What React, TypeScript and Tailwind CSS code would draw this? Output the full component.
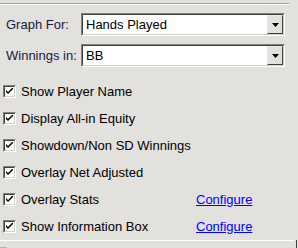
import React from "react";

const font = { fontFamily: "Tahoma, 'Liberation Sans', Arial, sans-serif" };

function Combo({ value }: { value: string }) {
  return (
    <div className="w-[204px] h-[23px] border border-t-[#808080] border-l-[#808080] border-r-white border-b-white">
      <div className="w-full h-full border border-t-[#404040] border-l-[#404040] border-r-[#d4d0c8] border-b-[#d4d0c8] bg-white flex items-center">
        <span className="flex-1 pl-[3px] text-[13px] text-black leading-none whitespace-nowrap">{value}</span>
        <div className="w-[16px] h-[19px] bg-[#e2e1dd] border border-t-[#ecebe8] border-l-[#ecebe8] border-r-[#404040] border-b-[#404040] flex items-center justify-center">
          <svg width="7" height="4" viewBox="0 0 7 4">
            <path d="M0 0h7L3.5 4z" fill="#000" />
          </svg>
        </div>
      </div>
    </div>
  );
}

function Check({ label, link }: { label: string; link?: boolean }) {
  return (
    <div className="h-[27px] flex items-center">
      <div className="ml-[3px] w-[13px] h-[13px] border border-t-[#808080] border-l-[#808080] border-r-white border-b-white">
        <div className="w-full h-full border border-t-[#404040] border-l-[#404040] border-r-[#d4d0c8] border-b-[#d4d0c8] bg-white flex items-center justify-center">
          <svg width="7" height="7" viewBox="0 0 7 7">
            <path d="M0 2l2 2l5-5v2l-5 5l-2-2z" fill="#000" />
            <path d="M0 3l2 2l5-5" stroke="#000" strokeWidth="1" fill="none" />
          </svg>
        </div>
      </div>
      <span className="ml-[5px] w-[175px] text-[13px] text-[#000000] leading-none whitespace-nowrap">{label}</span>
      {link && <span className="text-[13px] text-[#0000ff] underline leading-none whitespace-nowrap">Configure</span>}
    </div>
  );
}

export default function App() {
  return (
    <div className="w-[298px] h-[248px] bg-[#e2e1dd] overflow-hidden relative" style={font}>
      <div className="pt-[3px]">
        <div className="w-[289px] border-t border-t-[#a09f9b] border-b border-b-white" />
      </div>
      <div className="mt-[8px] flex items-center h-[23px]">
        <span className="ml-[6px] w-[75px] text-[13px] text-[#1a1a40] leading-none whitespace-nowrap">Graph For:</span>
        <Combo value="Hands Played" />
      </div>
      <div className="mt-[8px] flex items-center h-[23px]">
        <span className="ml-[6px] w-[75px] text-[13px] text-[#1a1a40] leading-none whitespace-nowrap">Winnings in:</span>
        <Combo value="BB" />
      </div>
      <div className="mt-[11px] flex flex-col">
        <Check label="Show Player Name" />
        <Check label="Display All-in Equity" />
        <Check label="Showdown/Non SD Winnings" />
        <Check label="Overlay Net Adjusted" />
        <Check label="Overlay Stats" link />
        <Check label="Show Information Box" link />
      </div>
      <div className="absolute left-0 top-[240px] w-[298px] h-[8px] flex">
        <div className="w-[294px] border-t border-t-white relative">
          <div className="absolute left-0 top-[6px] w-[7px] h-[2px] bg-[#b0b0b0]" />
          <span className="absolute left-[16px] top-[5px] text-[13px] leading-none text-black">Filters</span>
        </div>
        <div className="ml-[2px] w-px h-full bg-[#404040]" />
      </div>
    </div>
  );
}
